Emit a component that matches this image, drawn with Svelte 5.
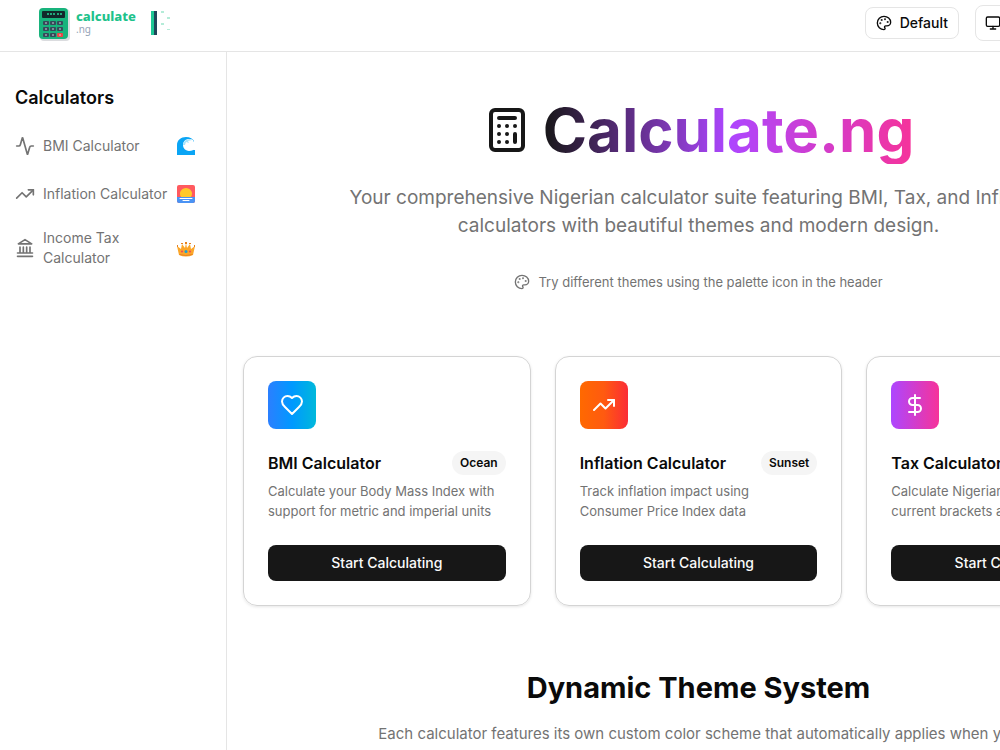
<script>
    let links = [
        { name: 'BMI Calculator', icon: 'activity', theme: 'ocean' },
        { name: 'Inflation Calculator', icon: 'trending', theme: 'sunset' },
        { name: 'Income Tax Calculator', icon: 'landmark', theme: 'royal' }
    ];
    let cards = [
        { name: 'BMI Calculator', icon: 'heart', theme: 'ocean', badge: 'Ocean', text: 'Calculate your Body Mass Index with support for metric and imperial units' },
        { name: 'Inflation Calculator', icon: 'trending', theme: 'sunset', badge: 'Sunset', text: 'Track inflation impact using Consumer\u00a0Price Index data' },
        { name: 'Tax Calculator', icon: 'dollar', theme: 'royal', badge: 'Royal', text: 'Calculate Nigerian income tax with current brackets and reliefs' }
    ];
    let keys = [0, 1, 2, 3, 4, 5, 6, 7, 8];
    let selected = '';
    function start(name) {
        selected = name;
    }
</script>

<style>
    :global(body) {
        margin: 0;
        background: #fff;
        color: #0a0a0a;
        font-family: Inter, "Liberation Sans", sans-serif;
        font-size: 14px;
        line-height: 20px;
    }

    h1, h2, h3, p, ul {
        margin: 0;
        padding: 0;
    }

    button {
        font: inherit;
        font-weight: 500;
        color: inherit;
        cursor: pointer;
    }

    a {
        color: inherit;
        text-decoration: none;
    }

    .icon {
        width: 16px;
        height: 16px;
        fill: none;
        stroke: currentColor;
        stroke-width: 2;
        stroke-linecap: round;
        stroke-linejoin: round;
    }

    .page {
        display: flex;
        flex-direction: column;
        min-height: 100vh;
        overflow: hidden;
    }

    header {
        display: flex;
        align-items: center;
        justify-content: space-between;
        box-sizing: border-box;
        height: 52px;
        min-width: 1011px;
        padding: 0 0 6px 36px;
        border-bottom: 1px solid #e5e5e5;
    }

    .logo {
        display: flex;
        align-items: center;
        gap: 4px;
    }

    .logo svg {
        display: block;
    }

    .word {
        display: flex;
        flex-direction: column;
        width: 64px;
        padding-bottom: 4px;
        font-family: "Noto Sans", sans-serif;
        font-size: 13px;
        font-weight: 800;
        line-height: 16px;
        color: #1ec28b;
    }

    .word small {
        font-size: 10px;
        font-weight: 400;
        line-height: 10px;
        color: #94a3b8;
    }

    .controls {
        display: flex;
        align-items: center;
        gap: 16px;
    }

    .controls button {
        display: flex;
        align-items: center;
        gap: 8px;
        height: 32px;
        padding: 0 10px;
        background: #fff;
        border: 1px solid #e5e5e5;
        border-radius: 8px;
    }

    .controls .mode {
        height: 36px;
        padding: 0 9px;
    }

    .body {
        display: flex;
        flex: 1;
    }

    aside {
        flex: none;
        box-sizing: border-box;
        width: 227px;
        padding: 32px 31px 32px 15px;
        border-right: 1px solid #e5e5e5;
    }

    aside h2 {
        margin-bottom: 12px;
        font-size: 18px;
        line-height: 28px;
        font-weight: 600;
    }

    aside ul {
        display: grid;
        gap: 4px;
        list-style: none;
    }

    aside a {
        display: flex;
        align-items: center;
        gap: 8px;
        min-height: 28px;
        padding: 8px 0;
        color: #737373;
    }

    aside a span {
        flex: 1;
    }

    aside .icon {
        width: 20px;
        height: 20px;
    }

    .emoji {
        flex: none;
        width: 18px;
        height: 18px;
    }

    main {
        flex: 1;
        padding: 48px 16px;
    }

    .hero {
        max-width: 768px;
        margin: 0 auto 64px;
        text-align: center;
    }

    h1 {
        display: flex;
        align-items: center;
        justify-content: center;
        gap: 12px;
        height: 60px;
        font-size: 60px;
        line-height: 68px;
        font-weight: 700;
    }

    h1 .icon {
        width: 48px;
        height: 48px;
        color: #171717;
    }

    h1 span {
        background: linear-gradient(to right, #171717, #ad46ff, #f6339a);
        background-clip: text;
        color: transparent;
    }

    .lead {
        margin: 24px 0 32px;
        font-size: 19px;
        line-height: 28px;
        color: #737373;
    }

    .hint {
        display: flex;
        align-items: center;
        justify-content: center;
        gap: 8px;
        font-size: 13px;
        color: #737373;
    }

    .cards {
        display: grid;
        grid-template-columns: repeat(3, 1fr);
        gap: 24px;
        min-width: 911px;
    }

    .card {
        padding: 24px;
        border: 1px solid #d4d4d4;
        border-radius: 14px;
        box-shadow: 0 1px 3px rgba(0, 0, 0, 0.1);
    }

    .tile {
        display: flex;
        align-items: center;
        justify-content: center;
        width: 48px;
        height: 48px;
        margin-bottom: 22px;
        border-radius: 8px;
        color: #fff;
    }

    .tile .icon {
        width: 24px;
        height: 24px;
    }

    .ocean {
        background: linear-gradient(to right, #2b7fff, #0099ff, #00b8db);
    }

    .sunset {
        background: linear-gradient(to right, #ff6900, #ff5a10, #fb2c36);
    }

    .royal {
        background: linear-gradient(to right, #ad46ff, #f6339a);
    }

    .title {
        display: flex;
        align-items: center;
        justify-content: space-between;
        height: 24px;
        margin-bottom: 6px;
    }

    .title h3 {
        font-size: 16px;
        font-weight: 600;
    }

    .badge {
        padding: 2px 8px;
        border-radius: 12px;
        background: #f5f5f5;
        font-size: 12px;
        font-weight: 600;
    }

    .card p {
        margin-bottom: 24px;
        font-size: 13px;
        color: #737373;
    }

    .card button {
        width: 100%;
        height: 36px;
        border: 0;
        border-radius: 8px;
        background: #171717;
        color: #fafafa;
    }

    .themes {
        max-width: 672px;
        margin: 64px auto 0;
        text-align: center;
    }

    .themes h2 {
        margin-bottom: 16px;
        font-size: 29px;
        line-height: 36px;
        font-weight: 700;
    }

    .themes p {
        font-size: 15px;
        line-height: 24px;
        color: #737373;
    }
</style>

{#snippet icon(name)}
    <svg class="icon" viewBox="0 0 24 24" aria-hidden="true">
        {#if name === 'activity'}
            <path d="M22 12h-2.5a2 2 0 0 0-1.9 1.5l-2.4 8.3a.25.25 0 0 1-.4 0L9.2 2.2a.25.25 0 0 0-.4 0l-2.4 8.3A2 2 0 0 1 4.5 12H2" />
        {:else if name === 'trending'}
            <path d="m22 7-8.5 8.5-5-5L2 17" />
            <path d="M16 7h6v6" />
        {:else if name === 'landmark'}
            <path d="M3 22h18M6 18v-7M10 18v-7M14 18v-7M18 18v-7M3 18h18M12 2l8 5H4z" />
        {:else if name === 'heart'}
            <path d="M19 14c1.49-1.46 3-3.21 3-5.5A5.5 5.5 0 0 0 16.5 3c-1.76 0-3 .5-4.5 2-1.5-1.5-2.74-2-4.5-2A5.5 5.5 0 0 0 2 8.5c0 2.3 1.5 4.05 3 5.5l7 7Z" />
        {:else if name === 'dollar'}
            <path d="M12 2v20M17 5H9.5a3.5 3.5 0 0 0 0 7h5a3.5 3.5 0 0 1 0 7H6" />
        {:else if name === 'monitor'}
            <rect width="20" height="14" x="2" y="3" rx="2" />
            <path d="M8 21h8M12 17v4" />
        {:else if name === 'palette'}
            <path d="M12 2C6.5 2 2 6.5 2 12s4.5 10 10 10c.93 0 1.65-.75 1.65-1.69 0-.44-.18-.83-.44-1.12-.29-.29-.44-.65-.44-1.13a1.64 1.64 0 0 1 1.67-1.67h2c3.05 0 5.55-2.5 5.55-5.55C21.97 6.01 17.46 2 12 2z" />
            <circle cx="13.5" cy="6.5" r="0.5" fill="currentColor" />
            <circle cx="17.5" cy="10.5" r="0.5" fill="currentColor" />
            <circle cx="8.5" cy="7.5" r="0.5" fill="currentColor" />
            <circle cx="6.5" cy="12.5" r="0.5" fill="currentColor" />
        {:else if name === 'calculator'}
            <rect width="16" height="20" x="4" y="2" rx="2" />
            <path d="M8 6h8M16 14v4M16 10h.01M12 10h.01M8 10h.01M12 14h.01M8 14h.01M12 18h.01M8 18h.01" />
        {/if}
    </svg>
{/snippet}

{#snippet emoji(theme)}
    <svg class="emoji" viewBox="0 0 18 18" aria-hidden="true">
        {#if theme === 'ocean'}
            <path fill="#0aa5f5" d="M0 18V8C0 3 4 0 9 0c4 0 7 2 8 4l-1 9h2v5z" />
            <path fill="#fff" d="M16 3q2 3 2 7c-1 3-3 4-6 4-4-.5-6-3-6-6 0-4 3-6 6-6 2 0 3 0 4 1z" />
            <path fill="#a9e4fb" d="M6 8c0-3 3-6 7-6l2 1-4 1 1 2-3-1-1 3z" />
        {:else if theme === 'sunset'}
            <rect width="18" height="18" rx="2" fill="#ff5a5f" />
            <path fill="#4a93f4" d="M0 12h18v4a2 2 0 0 1-2 2H2a2 2 0 0 1-2-2z" />
            <path fill="#ffc928" d="M4 12C1 7 5 3 9 3s8 4 5 9z" />
            <path stroke="#fff" stroke-linecap="round" d="M3 13.5h12M6 15.5h6" />
        {:else}
            <path fill="#fba629" d="m0 7 4 3 1-5 3 4 1-5 1 5 3-4 1 5 4-3-2 9q-7 3-14 0z" />
            <path stroke="#e8821e" fill="none" d="M2.5 15.5q6 2 13 0" />
            <circle cx="9" cy="12.5" r="1.5" fill="#18a0d8" />
            <circle cx="5" cy="12.5" r="1" fill="#ef4060" />
            <circle cx="13" cy="12.5" r="1" fill="#ef4060" />
            <path fill="#e8821e" d="M0 6h1v2H0zM17 6h1v2h-1zM4 4h2v1H4zM12 4h2v1h-2zM8 3h2v2H8z" />
        {/if}
    </svg>
{/snippet}

<div class="page">
    <header>
        <a class="logo" href="#home">
            <svg width="36" height="38" viewBox="0 0 36 38" aria-hidden="true">
                <rect x="4" y="5" width="30" height="32" rx="4" fill="#0f172a" opacity="0.15" />
                <rect x="3" y="4" width="29" height="31" rx="4" fill="#18b37c" />
                <rect x="6" y="7" width="23" height="7" rx="1" fill="#12262a" />
                <path d="M11 10h2m1 0h2m1 0h2m2 0h2m1 0h2" stroke="#22a77c" stroke-width="2" />
                {#each keys as k}
                    <rect x={7 + (k % 3) * 7} y={17 + Math.floor(k / 3) * 6} width="6" height="4" rx="1" fill={k === 8 ? '#ef4444' : '#374a5a'} />
                    <rect x={9 + (k % 3) * 7} y={18 + Math.floor(k / 3) * 6} width="2" height="2" fill="#c5d0d8" opacity="0.5" />
                {/each}
            </svg>
            <span class="word">calculate<small>.ng</small></span>
            <svg width="28" height="26" viewBox="0 0 28 26" aria-hidden="true">
                <path fill="#1ec795" d="M7 1h3v24H7z" />
                <path fill="#20465a" d="M10 1h3v24h-3z" />
                <path fill="#b4ecd8" d="M17 1h3v2h-3zM23 7h3v2h-3zM17 13h3v2h-3zM23 19h3v1h-3z" />
            </svg>
        </a>
        <div class="controls">
            <button>{@render icon('palette')}Default</button>
            <button class="mode" aria-label="Display mode">{@render icon('monitor')}</button>
        </div>
    </header>

    <div class="body">
        <aside>
            <h2>Calculators</h2>
            <ul>
                {#each links as link}
                    <li>
                        <a href="#{link.icon}">
                            {@render icon(link.icon)}
                            <span>{link.name}</span>
                            {@render emoji(link.theme)}
                        </a>
                    </li>
                {/each}
            </ul>
        </aside>

        <main>
            <div class="hero">
                <h1>{@render icon('calculator')}<span>Calculate.ng</span></h1>
                <p class="lead">Your comprehensive Nigerian calculator suite featuring BMI, Tax, and Inflation calculators with beautiful themes and modern design.</p>
                <p class="hint">{@render icon('palette')}Try different themes using the palette icon in the header</p>
            </div>

            <div class="cards">
                {#each cards as card}
                    <div class="card">
                        <div class="tile {card.theme}">{@render icon(card.icon)}</div>
                        <div class="title">
                            <h3>{card.name}</h3>
                            <span class="badge">{card.badge}</span>
                        </div>
                        <p>{card.text}</p>
                        <button on:click={() => start(card.name)}>Start Calculating</button>
                    </div>
                {/each}
            </div>

            <div class="themes">
                <h2>Dynamic Theme System</h2>
                <p>Each calculator features its own custom color scheme that automatically applies when you</p>
            </div>
        </main>
    </div>
</div>
